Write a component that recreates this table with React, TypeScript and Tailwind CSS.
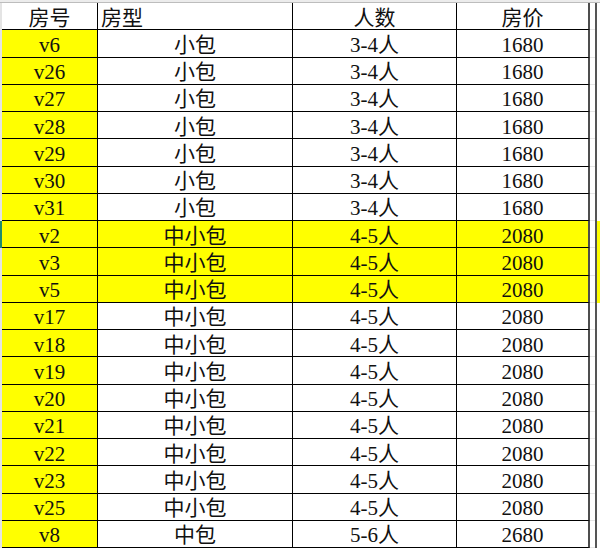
const rows: { no: string; type: string; people: string; price: string; hl?: boolean }[] = [
  { no: "v6", type: "小包", people: "3-4人", price: "1680" },
  { no: "v26", type: "小包", people: "3-4人", price: "1680" },
  { no: "v27", type: "小包", people: "3-4人", price: "1680" },
  { no: "v28", type: "小包", people: "3-4人", price: "1680" },
  { no: "v29", type: "小包", people: "3-4人", price: "1680" },
  { no: "v30", type: "小包", people: "3-4人", price: "1680" },
  { no: "v31", type: "小包", people: "3-4人", price: "1680" },
  { no: "v2", type: "中小包", people: "4-5人", price: "2080", hl: true },
  { no: "v3", type: "中小包", people: "4-5人", price: "2080", hl: true },
  { no: "v5", type: "中小包", people: "4-5人", price: "2080", hl: true },
  { no: "v17", type: "中小包", people: "4-5人", price: "2080" },
  { no: "v18", type: "中小包", people: "4-5人", price: "2080" },
  { no: "v19", type: "中小包", people: "4-5人", price: "2080" },
  { no: "v20", type: "中小包", people: "4-5人", price: "2080" },
  { no: "v21", type: "中小包", people: "4-5人", price: "2080" },
  { no: "v22", type: "中小包", people: "4-5人", price: "2080" },
  { no: "v23", type: "中小包", people: "4-5人", price: "2080" },
  { no: "v25", type: "中小包", people: "4-5人", price: "2080" },
  { no: "v8", type: "中包", people: "5-6人", price: "2680" },
];

const font = { fontFamily: '"Liberation Serif", "Noto Sans CJK SC", serif' };

function Row({
  cells,
  hl,
  header,
  selected,
}: {
  cells: string[];
  hl?: boolean;
  header?: boolean;
  selected?: boolean;
}) {
  const rowBg = hl ? "bg-[#ffff00]" : "bg-white";
  return (
    <div className="flex h-[27.25px] shrink-0 text-[21px] leading-none text-[#111]">
      <div className={`w-[2px] shrink-0 ${selected ? "bg-[#1e8a6e]" : "bg-[#e4e4e4]"}`} />
      <div
        className={`w-[96px] shrink-0 flex items-center justify-center pt-[4px] border-r border-b border-black ${
          header ? "bg-white" : "bg-[#ffff00]"
        }`}
      >
        {cells[0]}
      </div>
      <div
        className={`w-[195px] shrink-0 flex items-center pt-[4px] border-r border-b border-black ${rowBg} ${
          header ? "justify-start pl-[3px]" : "justify-center"
        }`}
      >
        {cells[1]}
      </div>
      <div className={`w-[164px] shrink-0 flex items-center justify-center pt-[4px] border-r border-b border-black ${rowBg}`}>
        {cells[2]}
      </div>
      <div className={`w-[133px] shrink-0 flex items-center justify-center pt-[4px] border-r-2 border-r-[#4d4d4d] border-b border-b-black ${rowBg}`}>
        {cells[3]}
      </div>
      <div className="w-[5px] shrink-0 bg-white border-b border-[#e6e6e6]" />
      <div className="w-[2px] shrink-0 bg-[#555555]" />
      <div className={`flex-1 ${hl ? "bg-[#ffff00]" : "bg-white"}`} />
    </div>
  );
}

export default function App() {
  return (
    <div className="w-[600px] h-[548px] overflow-hidden bg-white flex flex-col" style={font}>
      <div className="h-[3px] shrink-0 bg-[#ececec] border-b border-[#bdbdbd]" />
      <Row header cells={["房号", "房型", "人数", "房价"]} />
      {rows.map((r, i) => (
        <Row key={r.no} hl={r.hl} selected={i === 7} cells={[r.no, r.type, r.people, r.price]} />
      ))}
    </div>
  );
}
